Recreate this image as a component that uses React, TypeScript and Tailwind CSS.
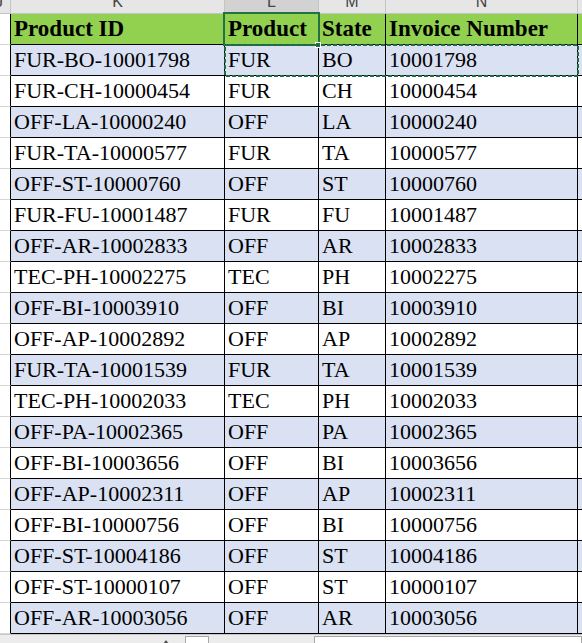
import React from "react";

const ids = [
  "FUR-BO-10001798",
  "FUR-CH-10000454",
  "OFF-LA-10000240",
  "FUR-TA-10000577",
  "OFF-ST-10000760",
  "FUR-FU-10001487",
  "OFF-AR-10002833",
  "TEC-PH-10002275",
  "OFF-BI-10003910",
  "OFF-AP-10002892",
  "FUR-TA-10001539",
  "TEC-PH-10002033",
  "OFF-PA-10002365",
  "OFF-BI-10003656",
  "OFF-AP-10002311",
  "OFF-BI-10000756",
  "OFF-ST-10004186",
  "OFF-ST-10000107",
  "OFF-AR-10003056",
];

const rows = ids.map((id) => {
  const [product, state, invoice] = id.split("-");
  return { id, product, state, invoice };
});

const cell = "h-full border-r border-black pl-[3px] leading-[30px] whitespace-nowrap overflow-hidden";

export default function App() {
  return (
    <div className="relative w-[582px] h-[643px] overflow-hidden bg-white flex flex-col font-['Liberation_Serif',serif] text-[22px] text-black">
      {/* column letters */}
      <div className="flex h-[14px] shrink-0 border-b border-[#c4c4c4] bg-[#e6e6e6] font-['Liberation_Sans',sans-serif] text-[16px] text-[#444]">
        <div className="w-[11px] border-r border-[#c4c4c4] flex items-end overflow-hidden">
          <span className="leading-none mb-[3px] -ml-[5px]">J</span>
        </div>
        <div className="w-[214px] border-r border-[#c4c4c4] flex items-end justify-center overflow-hidden">
          <span className="leading-none mb-[3px]">K</span>
        </div>
        <div className="w-[94px] border-r border-[#c4c4c4] bg-[#d2d2d2] flex items-end justify-center overflow-hidden">
          <span className="leading-none mb-[3px]">L</span>
        </div>
        <div className="w-[67px] border-r border-[#c4c4c4] flex items-end justify-center overflow-hidden">
          <span className="leading-none mb-[3px]">M</span>
        </div>
        <div className="w-[192px] border-r border-[#c4c4c4] flex items-end justify-center overflow-hidden">
          <span className="leading-none mb-[3px]">N</span>
        </div>
        <div className="flex-1" />
      </div>

      {/* header row */}
      <div className="flex h-[31px] shrink-0">
        <div className="w-[11px] h-full border-r border-black border-b border-b-[#d4d4d4]" />
        <div className="flex flex-1 h-full bg-[#92d050] border-b border-black font-bold text-[23px]">
          <div className={`w-[214px] ${cell}`}>Product ID</div>
          <div className={`w-[94px] ${cell}`}>Product</div>
          <div className={`w-[67px] ${cell}`}>State</div>
          <div className={`w-[192px] ${cell}`}>Invoice Number</div>
          <div className="flex-1" />
        </div>
      </div>

      {/* data rows */}
      {rows.map((r, i) => (
        <div key={r.id} className="flex h-[31px] shrink-0">
          <div className="w-[11px] h-full border-r border-black border-b border-b-[#d4d4d4]" />
          <div
            className={`flex flex-1 h-full border-b border-black ${
              i % 2 === 0 ? "bg-[#d9e1f2]" : "bg-white"
            }`}
          >
            <div className={`w-[214px] ${cell}`}>{r.id}</div>
            <div className={`w-[94px] ${cell}`}>{r.product}</div>
            <div className={`w-[67px] ${cell}`}>{r.state}</div>
            <div className={`w-[192px] ${cell}`}>{r.invoice}</div>
            <div className="flex-1" />
          </div>
        </div>
      ))}

      {/* bottom bar */}
      <div className="flex flex-1 items-start border-t border-[#c8c8c8] bg-[#ececec]">
        <div className="w-[163px]" />
        <div className="mt-[5px] w-0 h-0 border-l-[3px] border-r-[3px] border-b-[4px] border-l-transparent border-r-transparent border-b-[#555]" />
        <div className="w-[16px]" />
        <div className="mt-[1px] w-[24px] h-[10px] bg-white border border-[#a8a8a8]" />
        <div className="w-[105px]" />
        <div className="mt-[1px] flex-1 h-[10px] bg-white border border-[#a8a8a8]" />
      </div>

      {/* active cell */}
      <div className="absolute left-[223px] top-[12px] w-[97px] h-[34px] border-2 border-[#217346]" />
      <div className="absolute left-[315px] top-[42px] w-[6px] h-[6px] bg-[#217346] border border-white" />

      {/* copy marquee */}
      <svg className="absolute left-[224px] top-[44px]" width="355" height="33" viewBox="0 0 355 33">
        <rect x="1" y="1" width="353" height="31" fill="none" stroke="#1e6b41" strokeWidth="2" strokeDasharray="4 2" />
      </svg>
    </div>
  );
}
